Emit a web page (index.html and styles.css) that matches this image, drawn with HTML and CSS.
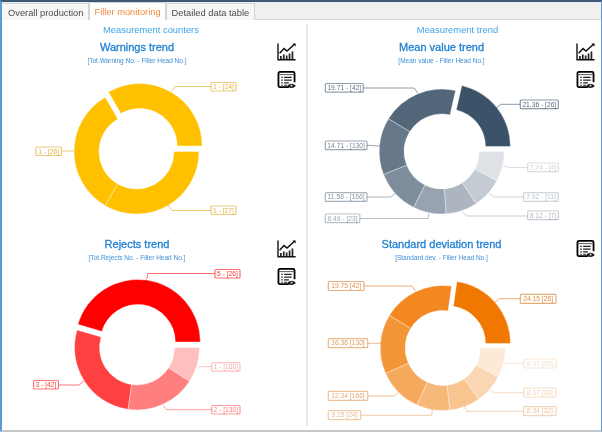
FILE: index.html
```html
<!DOCTYPE html>
<html lang="en">
<head>
  <meta charset="UTF-8" />
  <meta name="viewport" content="width=device-width, initial-scale=1.0"/>
  <title>Filler monitoring</title>
  <link rel="stylesheet" href="styles.css">
</head>
<body>
  <svg class="defs" width="0" height="0" aria-hidden="true">
    <symbol id="icon-trend" viewBox="0 0 19 18">
      <path d="M1 0.5V16.8H18.6" fill="none" stroke="#111" stroke-width="1.4"/>
      <path d="M2.6 10.2L7 5.6L10 8L17.8 1" fill="none" stroke="#111" stroke-width="1.5"/>
      <path d="M15.4 0.4H18.6V3.6z" fill="#111"/>
      <path d="M3 13h1.7v3H3zM5.9 11.4h1.7v4.6H5.9zM8.8 12.6h1.7V16H8.8zM11.7 10.6h1.7V16h-1.7zM14.6 8.6h1.7V16h-1.7z" fill="#222"/>
    </symbol>
    <symbol id="icon-table" viewBox="0 0 19 19">
      <path d="M12 17H2.6Q1 17 1 15.4V2.6Q1 1 2.6 1H16.4Q18 1 18 2.6V12" fill="none" stroke="#000" stroke-width="1.9"/>
      <path d="M1 3.8H18" stroke="#444" stroke-width="0.9"/>
      <path d="M4 6h1.6v1.5H4zM7 6h8v1.5H7zM4 8.9h1.6v1.5H4zM7 8.9h8v1.5H7zM4 11.8h1.6v1.5H4zM7 11.8h5v1.5H7zM4 14.4h1.6v1.2H4zM7 14.4h3v1.2H7z" fill="#222"/>
      <path d="M10.2 15.8Q14.8 11 19.4 15.8Q14.8 20 10.2 15.8z" fill="#111"/>
      <circle cx="14.8" cy="15.4" r="1.2" fill="#ccc"/>
    </symbol>
  </svg>

  <nav class="tabs">
    <a class="tab">Overall production</a>
    <a class="tab active">Filler monitoring</a>
    <a class="tab">Detailed data table</a>
  </nav>

  <main class="board">
    <section class="group group-counters">
      <h2>Measurement counters</h2>

      <div class="panel">
        <div class="panel-main">
          <h3>Warnings trend</h3>
          <p>[Tot.Warning No. - Filler Head No.]</p>
          <svg class="donut" data-chart="warnings"></svg>
        </div>
        <div class="tools">
          <svg class="tool"><use href="#icon-trend"/></svg>
          <svg class="tool"><use href="#icon-table"/></svg>
        </div>
      </div>

      <div class="panel">
        <div class="panel-main">
          <h3>Rejects trend</h3>
          <p>[Tot.Rejects No. - Filler Head No.]</p>
          <svg class="donut" data-chart="rejects"></svg>
        </div>
        <div class="tools">
          <svg class="tool"><use href="#icon-trend"/></svg>
          <svg class="tool"><use href="#icon-table"/></svg>
        </div>
      </div>
    </section>

    <section class="group group-trend">
      <h2>Measurement trend</h2>

      <div class="panel">
        <div class="panel-main">
          <h3>Mean value trend</h3>
          <p>[Mean value - Filler Head No.]</p>
          <svg class="donut" data-chart="mean"></svg>
        </div>
        <div class="tools">
          <svg class="tool"><use href="#icon-trend"/></svg>
          <svg class="tool"><use href="#icon-table"/></svg>
        </div>
      </div>

      <div class="panel">
        <div class="panel-main">
          <h3>Standard deviation trend</h3>
          <p>[Standard dev. - Filler Head No.]</p>
          <svg class="donut" data-chart="deviation"></svg>
        </div>
        <div class="tools">
          <svg class="tool"><use href="#icon-table"/></svg>
        </div>
      </div>
    </section>
  </main>

  <script src="charts.js"></script>
</body>
</html>
```

FILE: styles.css
```css
* {
  box-sizing: border-box;
}

body {
  margin: 0;
  width: 602px;
  height: 432px;
  overflow: hidden;
  display: flex;
  flex-direction: column;
  background: #fff;
  font-family: 'Liberation Sans', Arial, sans-serif;
  border-top: 2px solid #3b5a78;
  border-left: 2px solid #5b9bd5;
  border-right: 1px solid #5b9bd5;
  border-bottom: 2px solid #c4c8cc;
}

.defs {
  position: absolute;
}

.tabs {
  display: flex;
  height: 18px;
  flex: none;
  background: #f0f0f0;
  border-bottom: 1px solid #d4d4d4;
  filter: blur(0.3px);
}

.tab {
  padding: 2px 5px 0;
  height: 17px;
  margin-top: 1px;
  font-size: 9.3px;
  line-height: 14px;
  color: #4a4a4a;
  background: #f7f7f7;
  border: 1px solid #d4d4d4;
  border-bottom: none;
  white-space: nowrap;
}

.tab:first-child {
  margin-left: -1px;
  padding-left: 6px;
}

.tab.active {
  height: 18px;
  margin-top: 0;
  padding: 2px 4px 0;
  color: #f58a3c;
  background: #fff;
}

.board {
  flex: 1;
  display: flex;
  min-height: 0;
  filter: blur(0.3px);
}

.group {
  display: flex;
  flex-direction: column;
}

.group-counters {
  width: 304px;
}

.group-trend {
  flex: 1;
  margin-top: 4px;
  margin-bottom: 4px;
  border-left: 2px solid #e9e9e9;
}

.group h2 {
  flex: none;
  margin: 4px 0 0;
  height: 14px;
  font-size: 9.4px;
  line-height: 11px;
  font-weight: normal;
  text-align: center;
  color: #3fa2ea;
  padding-right: 6px;
}

.group-trend h2 {
  margin-top: 0;
  padding-right: 0;
  padding-left: 6px;
}

.panel {
  display: flex;
  height: 197px;
  flex: none;
}

.panel-main {
  width: 270px;
  text-align: center;
}

.group-trend .panel-main {
  width: 267px;
}

.panel h3 {
  margin: 1px 0 0;
  height: 16px;
  font-size: 11px;
  line-height: 16px;
  font-weight: normal;
  color: #1f7fd0;
  -webkit-text-stroke: 0.3px #1f7fd0;
}

.panel p {
  margin: 0;
  height: 11px;
  font-size: 6.5px;
  line-height: 11px;
  color: #3d8fd8;
}

.donut {
  display: block;
  margin-top: 2px;
  width: 100%;
  height: 165px;
}

.tools {
  display: flex;
  flex-direction: column;
  gap: 10px;
  padding: 5px 0 0 5px;
}

.group-trend .tools {
  padding-left: 1px;
}

.tool {
  width: 19px;
  height: 18px;
  overflow: visible;
}

.slice {
  stroke: #fff;
  stroke-opacity: 0.55;
  stroke-width: 0.7;
}

.leader {
  fill: none;
  stroke-width: 1;
}

.tag {
  fill: #fff;
  stroke-width: 1.2;
}

.tag-text {
  font-family: 'Liberation Sans', Arial, sans-serif;
  font-size: 6.7px;
  text-anchor: middle;
}
```

FILE: charts.js
```js
const CHARTS = {
  warnings: {
    view: [2, 68, 270, 165],
    center: [136.5, 151.5],
    explode: 6.3,
    color: '#ffc000',
    ink: '#dba520',
    slices: [
      { value: 1, alpha: 1, ink: 0.85, text: '1 - [24]', box: [211, 82.5, 25, 8.5], line: [[211, 86.5], [175, 86.5], [171.5, 91.5]] },
      { value: 1, alpha: 1, ink: 0.85, text: '1 - [26]', box: [36, 147, 25.5, 8.5], line: [[61.5, 151], [74, 151]] },
      { value: 1, alpha: 1, ink: 0.85, text: '1 - [27]', box: [211, 206, 25, 8.5], line: [[211, 210.5], [172, 210.5], [168, 205]] }
    ]
  },
  rejects: {
    view: [2, 265, 270, 165],
    center: [137, 347.5],
    explode: 5.6,
    color: '#ff0000',
    slices: [
      { value: 5, alpha: 1, ink: 0.8, text: '5 - [26]', box: [215, 269.5, 25, 8.5], line: [[215, 273.5], [147.7, 273.5], [146.7, 279.5]] },
      { value: 3, alpha: 0.75, ink: 0.75, text: '3 - [42]', box: [33.5, 380.5, 25, 8.5], line: [[58.5, 385], [79, 385], [84, 381]] },
      { value: 2, alpha: 0.5, ink: 0.55, text: '2 - [130]', box: [211.7, 405.5, 28.3, 8.5], line: [[211.7, 409.7], [166.7, 409.7], [163.3, 405.3]] },
      { value: 1, alpha: 0.25, ink: 0.35, text: '1 - [166]', box: [211.7, 362.7, 28.3, 8.5], line: [[211.7, 366.7], [198, 366.7]] }
    ]
  },
  mean: {
    view: [308, 68, 267, 165],
    center: [441.7, 151.5],
    explode: 8,
    color: '#3b5269',
    slices: [
      { value: 21.36, alpha: 1, ink: 0.85, text: '21.36 - [26]', box: [520.3, 100, 38, 8.7], line: [[520.3, 104.3], [501, 104.3], [496, 108.3]] },
      { value: 19.71, alpha: 0.88, ink: 0.8, text: '19.71 - [42]', box: [325.3, 83.5, 38, 8.7], line: [[363.3, 88], [414.3, 88], [417.7, 93.3]] },
      { value: 14.71, alpha: 0.78, ink: 0.72, text: '14.71 - [130]', box: [325.3, 141, 41.7, 8.7], line: [[367, 145.3], [380, 146]] },
      { value: 11.58, alpha: 0.66, ink: 0.62, text: '11.58 - [166]', box: [325.3, 192.7, 41.7, 8.7], line: [[367, 197], [391, 197], [395, 193.3]] },
      { value: 8.49, alpha: 0.53, ink: 0.52, text: '8.49 - [23]', box: [325.3, 214, 34.5, 8.7], line: [[359.8, 218.5], [428, 218.5], [429, 213]] },
      { value: 8.12, alpha: 0.42, ink: 0.42, text: '8.12 - [7]', box: [527.7, 211, 30.6, 8.7], line: [[527.7, 216], [466.5, 216], [463, 212]] },
      { value: 7.92, alpha: 0.3, ink: 0.36, text: '7.92 - [11]', box: [523.7, 192.7, 34.6, 8.7], line: [[523.7, 197], [494.3, 197], [489.3, 193.3]] },
      { value: 7.74, alpha: 0.17, ink: 0.27, text: '7.74 - [4]', box: [527.7, 163, 30.6, 8.7], line: [[527.7, 167.5], [509, 167.5], [503, 165.7]] }
    ]
  },
  deviation: {
    view: [308, 265, 267, 165],
    center: [442.7, 348],
    explode: 7,
    color: '#f07800',
    ink: '#d9741a',
    slices: [
      { value: 24.15, alpha: 1, ink: 0.85, text: '24.15 [26]', box: [520.3, 294.3, 35.7, 9], line: [[520.3, 298.7], [499.3, 298.7], [494.3, 302.7]] },
      { value: 19.75, alpha: 0.88, ink: 0.8, text: '19.75 [42]', box: [328.3, 281.5, 35.7, 9], line: [[364, 286], [412, 286], [415.3, 291]] },
      { value: 16.36, alpha: 0.78, ink: 0.72, text: '16.36 [130]', box: [328.3, 338.7, 39.4, 9], line: [[367.7, 343.3], [381, 343.3]] },
      { value: 12.34, alpha: 0.64, ink: 0.62, text: '12.34 [166]', box: [328.3, 391.3, 39.4, 9], line: [[367.7, 396], [394.3, 396], [398.3, 392.7]] },
      { value: 9.15, alpha: 0.52, ink: 0.52, text: '9.15 [24]', box: [328.3, 410.7, 32.4, 9], line: [[360.7, 415.3], [431.7, 415.3], [432.3, 409.3]] },
      { value: 8.34, alpha: 0.44, ink: 0.44, text: '8.34 [32]', box: [523.7, 406.7, 32.3, 9], line: [[523.7, 411.3], [466.7, 411.3], [464.3, 406]] },
      { value: 8.17, alpha: 0.3, ink: 0.34, text: '8.17 [30]', box: [523.7, 388, 32.3, 9], line: [[523.7, 392.7], [494.3, 392.7], [488.7, 389.3]] },
      { value: 8.07, alpha: 0.16, ink: 0.25, text: '8.07 [35]', box: [523.7, 359, 32.3, 9], line: [[523.7, 363.3], [504, 363.3]] }
    ]
  }
};

const OUTER = 62.5;
const INNER = 37.5;
const NS = 'http://www.w3.org/2000/svg';

function el(name, attrs, parent) {
  const node = document.createElementNS(NS, name);
  Object.keys(attrs).forEach(key => node.setAttribute(key, attrs[key]));
  parent.appendChild(node);
  return node;
}

// angles run counter-clockwise from 3 o'clock, like the chart does
function point(cx, cy, radius, angle) {
  return (cx + radius * Math.cos(angle)).toFixed(2) + ' ' + (cy - radius * Math.sin(angle)).toFixed(2);
}

function slicePath(cx, cy, from, to) {
  const large = to - from > Math.PI ? 1 : 0;
  return 'M' + point(cx, cy, OUTER, from) +
    'A' + OUTER + ' ' + OUTER + ' 0 ' + large + ' 0 ' + point(cx, cy, OUTER, to) +
    'L' + point(cx, cy, INNER, to) +
    'A' + INNER + ' ' + INNER + ' 0 ' + large + ' 1 ' + point(cx, cy, INNER, from) + 'Z';
}

function drawChart(svg, chart) {
  svg.setAttribute('viewBox', chart.view.join(' '));
  const total = chart.slices.reduce((sum, s) => sum + s.value, 0);
  const ink = chart.ink || chart.color;
  let from = 0;

  chart.slices.forEach((s, i) => {
    const to = from + (s.value / total) * Math.PI * 2;
    const mid = (from + to) / 2;
    const shift = i === 0 ? chart.explode : 0;
    const cx = chart.center[0] + shift * Math.cos(mid);
    const cy = chart.center[1] - shift * Math.sin(mid);
    el('path', { class: 'slice', d: slicePath(cx, cy, from, to), fill: chart.color, 'fill-opacity': s.alpha }, svg);

    el('polyline', { class: 'leader', points: s.line.map(p => p.join(',')).join(' '), stroke: ink, 'stroke-opacity': s.ink * 0.7 }, svg);
    el('rect', { class: 'tag', x: s.box[0], y: s.box[1], width: s.box[2], height: s.box[3], rx: 1, stroke: ink, 'stroke-opacity': s.ink * 0.7 }, svg);
    const label = el('text', { class: 'tag-text', x: s.box[0] + s.box[2] / 2, y: s.box[1] + 6.6, fill: ink, 'fill-opacity': s.ink }, svg);
    label.textContent = s.text;

    from = to;
  });
}

document.querySelectorAll('[data-chart]').forEach(svg => {
  drawChart(svg, CHARTS[svg.dataset.chart]);
});
```
